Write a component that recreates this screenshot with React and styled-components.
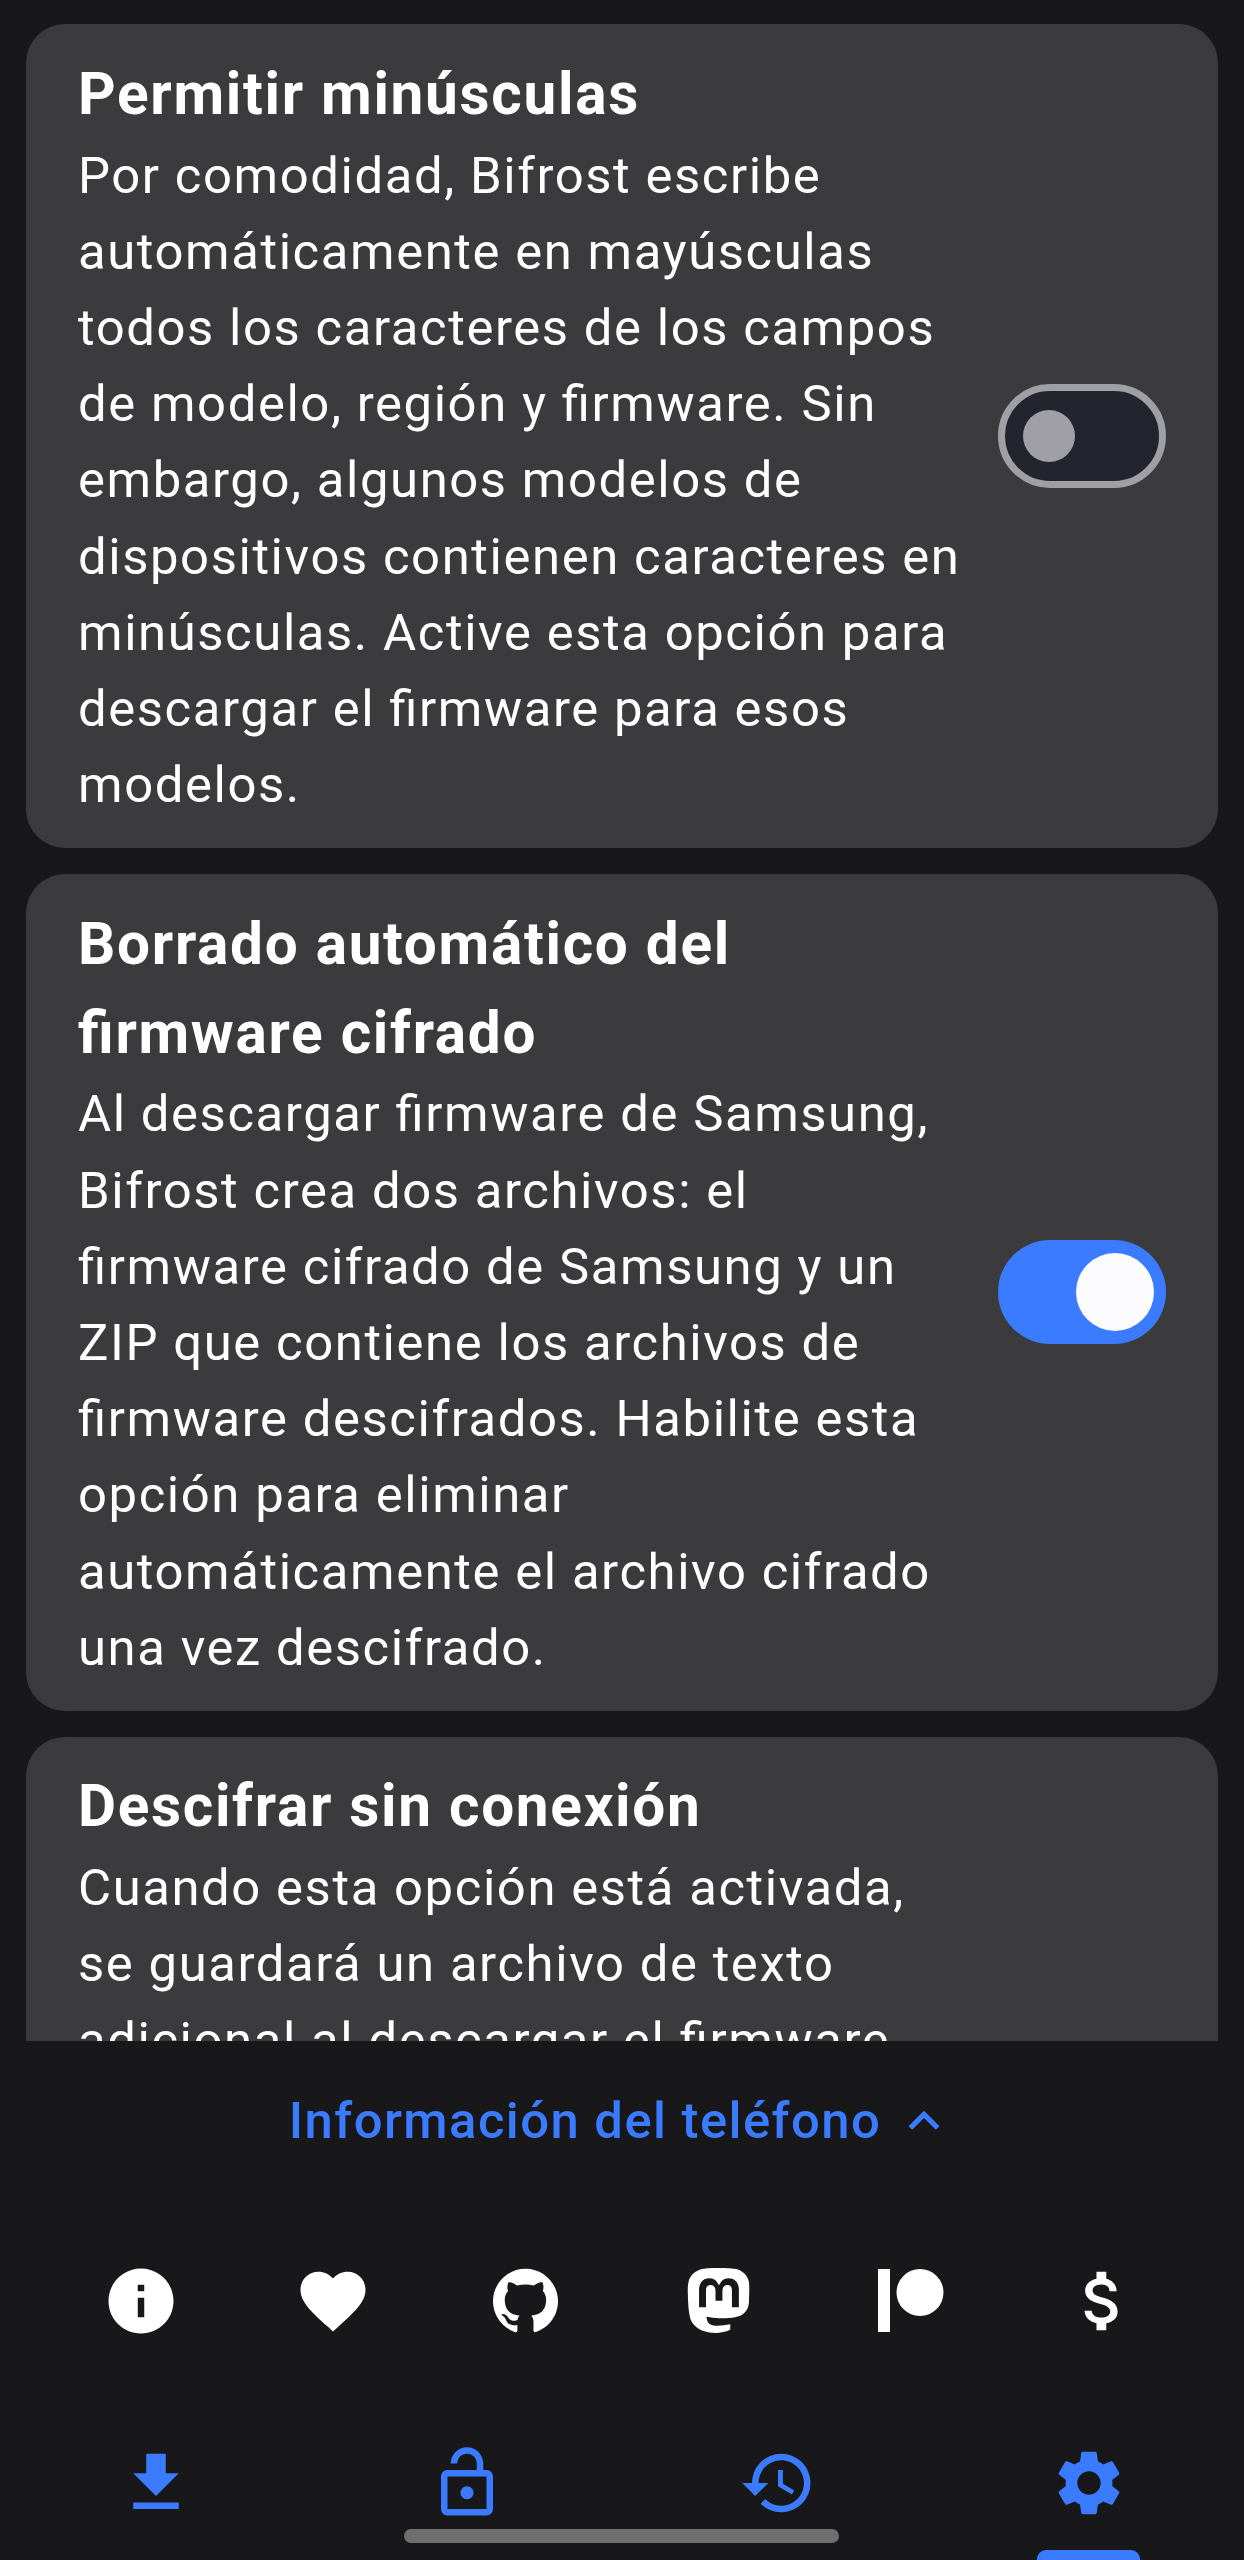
import React from 'react';
import styled, { createGlobalStyle } from 'styled-components';
import { MdInfo, MdFavorite, MdAttachMoney, MdFileDownload, MdOutlineLockOpen, MdHistory, MdSettings, MdExpandLess } from 'react-icons/md';
import { SiGithub, SiMastodon } from 'react-icons/si';

const GlobalStyle = createGlobalStyle`
  html, body {
    margin: 0;
    padding: 0;
    background: #18181a;
    font-family: Roboto, "Liberation Sans", sans-serif;
  }
`;

const Screen = styled.div`
  width: 1244px;
  height: 2560px;
  display: flex;
  flex-direction: column;
  position: relative;
  overflow: hidden;
  background: #18181a;
`;

const Scroller = styled.div`
  height: 2041px;
  flex: none;
  overflow: hidden;
  display: flex;
  flex-direction: column;
  gap: 26px;
  padding: 24px 26px 0;
  box-sizing: border-box;
`;

const Card = styled.section`
  flex: none;
  display: flex;
  align-items: center;
  gap: 26px;
  padding: 24.65px 52px;
  background: #3b3b3d;
  border-radius: 39px;
`;

const CardText = styled.div`
  flex: 1;
  min-width: 0;
  color: #fff;
  font-feature-settings: "liga" 1;
`;

const CardTitle = styled.h2`
  margin: 0 0 -1px;
  padding-top: 1px;
  font-size: 58.5px;
  line-height: 88.9px;
  font-weight: 700;
  letter-spacing: 1.7px;
`;

const CardBody = styled.p`
  margin: 0;
  font-size: 50.8px;
  line-height: 76.2px;
  font-weight: 400;
  letter-spacing: 1.59px;
`;

const Track = styled.div`
  flex: none;
  width: 168px;
  height: 104px;
  box-sizing: border-box;
  border-radius: 52px;
  display: flex;
  align-items: center;
  visibility: ${p => (p.$hidden ? 'hidden' : 'visible')};
  background: ${p => (p.$on ? '#3a7bff' : '#22252d')};
  border: ${p => (p.$on ? 'none' : '7px solid #a09fa5')};
  padding: ${p => (p.$on ? '0 12px' : '0 18px')};
  justify-content: ${p => (p.$on ? 'flex-end' : 'flex-start')};
`;

const Thumb = styled.div`
  width: ${p => (p.$on ? 78 : 52)}px;
  height: ${p => (p.$on ? 78 : 52)}px;
  border-radius: 50%;
  background: ${p => (p.$on ? '#fcfcff' : '#a09fa5')};
`;

const PhoneInfo = styled.div`
  height: 159px;
  flex: none;
  display: flex;
  align-items: center;
  justify-content: center;
  gap: 12px;
  color: #3a7bff;
  font-size: 50.8px;
  font-weight: 500;
  letter-spacing: 1.45px;
`;

const Socials = styled.div`
  height: 201px;
  flex: none;
  display: grid;
  grid-template-columns: repeat(6, 192.5px);
  justify-content: center;
  align-items: center;
  color: #fff;
`;

const IconCell = styled.div`
  display: flex;
  justify-content: center;
  align-items: center;
`;

const BottomNav = styled.nav`
  flex: 1;
  display: grid;
  grid-template-columns: repeat(4, 1fr);
  align-items: start;
  padding-top: 43px;
  color: #3a7bff;
`;

const NavItem = styled.div`
  display: flex;
  justify-content: center;
`;

const Indicator = styled.div`
  position: absolute;
  left: 1037px;
  bottom: 0;
  width: 103px;
  height: 10px;
  background: #3a7bff;
  border-radius: 9px 9px 0 0;
`;

const HomeHandle = styled.div`
  position: absolute;
  left: 404px;
  top: 2529px;
  width: 435px;
  height: 14px;
  border-radius: 7px;
  background: #6f6f70;
`;

const PatreonIcon = () => (
  <svg width="66" height="66" viewBox="0 0 66 66" fill="currentColor">
    <rect x="0" y="1" width="12" height="63" />
    <circle cx="42" cy="24.5" r="23.5" />
  </svg>
);

const settings = [
  {
    title: 'Permitir minúsculas',
    body: 'Por comodidad, Bifrost escribe automáticamente en mayúsculas todos los caracteres de los campos de modelo, región y firmware. Sin embargo, algunos modelos de dispositivos contienen caracteres en minúsculas. Active esta opción para descargar el firmware para esos modelos.',
    on: false,
  },
  {
    title: 'Borrado automático del firmware cifrado',
    body: 'Al descargar firmware de Samsung, Bifrost crea dos archivos: el firmware cifrado de Samsung y un ZIP que contiene los archivos de firmware descifrados. Habilite esta opción para eliminar automáticamente el archivo cifrado una vez descifrado.',
    on: true,
  },
  {
    title: 'Descifrar sin conexión',
    body: 'Cuando esta opción está activada, se guardará un archivo de texto adicional al descargar el firmware.',
    on: false,
    clipped: true,
  },
];

export default function App() {
  return (
    <Screen>
      <GlobalStyle />
      <Scroller>
        {settings.map(s => (
          <Card key={s.title}>
            <CardText>
              <CardTitle>{s.title}</CardTitle>
              <CardBody>{s.body}</CardBody>
            </CardText>
            <Track $on={s.on} $hidden={s.clipped}>
              <Thumb $on={s.on} />
            </Track>
          </Card>
        ))}
      </Scroller>
      <PhoneInfo>
        Información del teléfono
        <MdExpandLess size={62} />
      </PhoneInfo>
      <Socials>
        <IconCell><MdInfo size={78} /></IconCell>
        <IconCell><MdFavorite size={78} /></IconCell>
        <IconCell><SiGithub size={65} /></IconCell>
        <IconCell><SiMastodon size={65} /></IconCell>
        <IconCell><PatreonIcon /></IconCell>
        <IconCell><MdAttachMoney size={78} /></IconCell>
      </Socials>
      <BottomNav>
        <NavItem><MdFileDownload size={78} /></NavItem>
        <NavItem><MdOutlineLockOpen size={78} /></NavItem>
        <NavItem><MdHistory size={78} /></NavItem>
        <NavItem><MdSettings size={78} /></NavItem>
      </BottomNav>
      <Indicator />
      <HomeHandle />
    </Screen>
  );
}
